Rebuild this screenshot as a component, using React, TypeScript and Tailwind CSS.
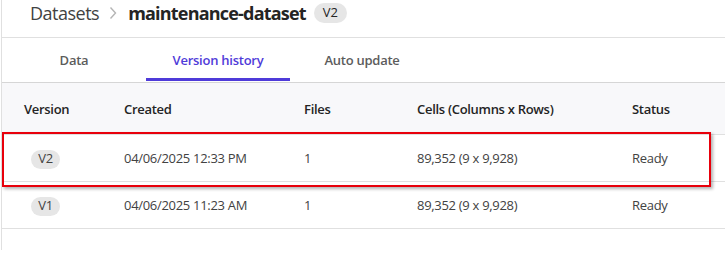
import React from "react";

const rows = [
  { v: "V2", created: "04/06/2025 12:33 PM", files: "1", cells: "89,352 (9 x 9,928)", status: "Ready" },
  { v: "V1", created: "04/06/2025 11:23 AM", files: "1", cells: "89,352 (9 x 9,928)", status: "Ready" },
];

const cols = "grid grid-cols-[100px_180px_113px_215px_1fr]";

export default function App() {
  return (
    <div className="w-[725px] h-[257px] bg-white overflow-hidden relative" style={{ fontFamily: '"Open Sans", "Noto Sans", sans-serif' }}>
      <div className="ml-[1px] border-l border-[#e0e0e0] h-[250px]">
        {/* Breadcrumb */}
        <div className="h-[38px] border-b border-[#e0e0e0]">
          <div className="h-[26px] flex items-center pl-[28px]">
            <span className="text-[18px] text-[#424242] tracking-[-0.5px]">Datasets</span>
            <svg className="ml-[10px] mr-[11px]" width="8" height="14" viewBox="0 0 8 14">
              <path d="M1.5 1.5 L6.5 7 L1.5 12.5" fill="none" stroke="#b5b5b5" strokeWidth="1.4" />
            </svg>
            <span className="text-[18px] font-bold text-[#242424] tracking-[-0.8px]">maintenance-dataset</span>
            <span className="ml-[8px] h-[20px] px-[9px] rounded-full bg-[#e6e6e6] text-[13px] text-[#242424] flex items-center">V2</span>
          </div>
        </div>
        {/* Tabs */}
        <div className="h-[45px] flex border-b border-[#d6d6d6]">
          {["Data", "Version history", "Auto update"].map((t, i) => (
            <div key={t} className="w-[144px] relative flex items-center justify-center pt-[2px]">
              <span className={"text-[13px] font-semibold tracking-[-0.25px] " + (i === 1 ? "text-[#4f3bd9]" : "text-[#5c5c5c]")}>{t}</span>
              {i === 1 && <div className="absolute left-0 right-0 bottom-[1px] h-[3px] bg-[#4f3bd9]" />}
            </div>
          ))}
        </div>
        {/* Table header */}
        <div className={cols + " h-[52px] items-center pt-[3px] bg-[#f8f8fa] border-b border-[#e0e0e0] text-[13px] font-semibold text-[#242424] tracking-[-0.3px]"}>
          <div className="pl-[22px]">Version</div>
          <div className="pl-[22px]">Created</div>
          <div className="pl-[22px]">Files</div>
          <div className="pl-[22px]">Cells (Columns x Rows)</div>
          <div className="pl-[22px]">Status</div>
        </div>
        {rows.map((r) => (
          <div key={r.v} className={cols + " h-[47px] items-center pt-[2px] border-b border-[#e0e0e0] text-[13px] text-[#424242] tracking-[-0.3px]"}>
            <div className="pl-[29px]">
              <span className="inline-flex items-center justify-center w-[29px] h-[19px] rounded-full bg-[#e6e6e6] text-[13px] text-[#424242]">{r.v}</span>
            </div>
            <div className="pl-[22px]">{r.created}</div>
            <div className="pl-[22px]">{r.files}</div>
            <div className="pl-[22px]">{r.cells}</div>
            <div className="pl-[22px]">{r.status}</div>
          </div>
        ))}
      </div>
      {/* Highlight annotation */}
      <div className="absolute left-[2px] top-[132px] w-[709px] h-[55px] border-2 border-[#e8000b] shadow-[2px_2px_3px_rgba(0,0,0,0.3)]" />
    </div>
  );
}
